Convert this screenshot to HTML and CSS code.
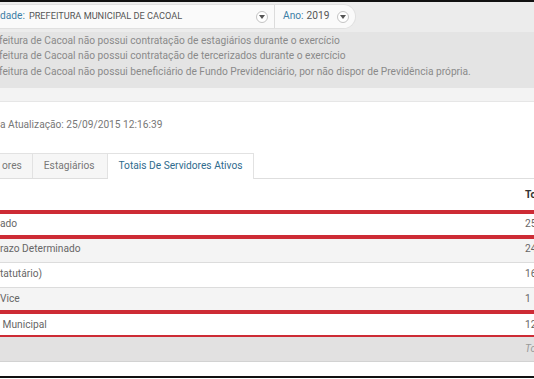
FILE: index.html
```html
<!DOCTYPE html>
<html lang="pt-BR">
  <head>
    <meta charset="UTF-8" />
    <title>Totais de Servidores Ativos</title>
    <link rel="stylesheet" href="styles.css">
  </head>
  <body>
    <div class="frame">
      <div class="page">
        <!-- filtros -->
        <div class="filters">
          <div class="pill">
            <div class="field unit">
              <span class="lbl">dade:</span>
              <span class="val">PREFEITURA MUNICIPAL DE CACOAL</span>
              <i class="caret"></i>
            </div>
            <div class="field year">
              <span class="lbl">Ano:</span>
              <span class="val">2019</span>
              <i class="caret"></i>
            </div>
          </div>
        </div>

        <!-- avisos -->
        <div class="notice">
          <p>feitura de Cacoal não possui contratação de estagiários durante o exercício</p>
          <p>feitura de Cacoal não possui contratação de tercerizados durante o exercício</p>
          <p>feitura de Cacoal não possui beneficiário de Fundo Previdenciário, por não dispor de Previdência própria.</p>
        </div>

        <!-- painel -->
        <div class="panel">
          <p class="updated">a Atualização: 25/09/2015 12:16:39</p>
          <ul class="tabs">
            <li>ores</li>
            <li>Estagiários</li>
            <li class="active">Totais De Servidores Ativos</li>
          </ul>
          <table class="totals">
            <thead>
              <tr><th></th><th>Total</th></tr>
            </thead>
            <tbody>
              <tr class="marked"><td>ado</td><td>25</td></tr>
              <tr><td>razo Determinado</td><td>24</td></tr>
              <tr><td>tatutário)</td><td>16</td></tr>
              <tr><td>Vice</td><td>1</td></tr>
              <tr class="marked"><td>&nbsp;Municipal</td><td>12</td></tr>
            </tbody>
            <tfoot>
              <tr><td></td><td>Total</td></tr>
            </tfoot>
          </table>
        </div>
      </div>
    </div>
  </body>
</html>
```

FILE: styles.css
```css
* {
  margin: 0;
  padding: 0;
  box-sizing: border-box;
}
li {
  list-style: none;
}
body {
  background: #fff;
  overflow: hidden;
  font: 10.2px/1.4 'Roboto', 'Liberation Sans', sans-serif;
  color: #777;
}

/* moldura */
.frame {
  height: 378px;
  border-top: 2px solid #111;
  border-bottom: 2px solid #111;
  overflow: hidden;
}
.page {
  width: 600px;
  margin-left: -12px;
  height: 100%;
  background: #f3f3f3;
}

/* filtros */
.filters {
  height: 30px;
  padding-top: 2px;
  background: #ececec;
}
.pill {
  display: inline-flex;
  height: 25px;
  background: #fafafa;
  border: 1px solid #e0e0e0;
  border-left: none;
  border-radius: 0 13px 13px 0;
}
.field {
  display: flex;
  align-items: center;
  gap: 4px;
  color: #555;
}
.unit {
  width: 287px;
  padding-left: 12px;
  border-right: 1px solid #dcdcdc;
}
.unit .val {
  font-size: 9.2px;
  flex: 1;
}
.year {
  padding: 0 6px 0 8px;
  gap: 3px;
}
.year .val {
  margin-right: 5px;
}
.lbl {
  color: #3d7fa6;
}
.caret {
  width: 12px;
  height: 12px;
  border: 1px solid #c4c4c4;
  border-radius: 50%;
  background: #fff;
  margin-right: 6px;
  display: flex;
  justify-content: center;
  align-items: center;
}
.year .caret {
  margin-right: 0;
}
.caret::after {
  content: '';
  border-left: 3px solid transparent;
  border-right: 3px solid transparent;
  border-top: 4px solid #555;
  margin-top: 1px;
}

/* avisos */
.notice {
  height: 56px;
  padding: 1px 0 0 11px;
  background: #e4e4e4;
  color: #8a8a8a;
  line-height: 15.4px;
}

/* painel */
.panel {
  margin-top: 13px;
  height: 300px;
  background: #fff;
  border-top: 1px solid #e6e6e6;
  padding-top: 16px;
}
.updated {
  padding-left: 12px;
  line-height: 14px;
  color: #777;
}
.tabs {
  margin-top: 21px;
  display: flex;
  height: 26px;
  border-bottom: 1px solid #dedede;
}
.tabs li {
  height: 25px;
  line-height: 24px;
  padding: 0 12px 0 11px;
  background: #f6f6f6;
  border: 1px solid #e2e2e2;
  border-bottom: none;
  border-left: none;
  color: #777;
}
.tabs li:first-child {
  padding-left: 14px;
  padding-right: 10px;
}
.tabs li.active {
  height: 26px;
  background: #fff;
  color: #2f6b8d;
  padding: 0 11px;
}

/* tabela */
.totals {
  width: 100%;
  border-collapse: collapse;
}
.totals th,
.totals td {
  position: relative;
  padding: 0 0 0 12px;
  text-align: left;
  height: 25px;
  color: #666;
}
.totals th:last-child,
.totals td:last-child {
  width: 71px;
  padding-left: 8px;
}
.totals thead th {
  height: 33px;
  color: #333;
  font-weight: bold;
  font-size: 10.4px;
}
.totals tbody tr {
  border-top: 1px solid #dcdcdc;
}
.totals tbody tr:nth-child(even) {
  background: #f4f4f4;
}
.totals tfoot td {
  height: 24px;
  background: #e2e1e1;
  border-bottom: 1px solid #d2d2d2;
  font-style: italic;
  color: #999;
}

/* destaque vermelho */
.marked td::after {
  content: '';
  position: absolute;
  left: 0;
  right: 0;
  top: -3px;
  bottom: -2px;
  border-top: 4px solid #cd2b35;
  border-bottom: 4px solid #cd2b35;
}
```
